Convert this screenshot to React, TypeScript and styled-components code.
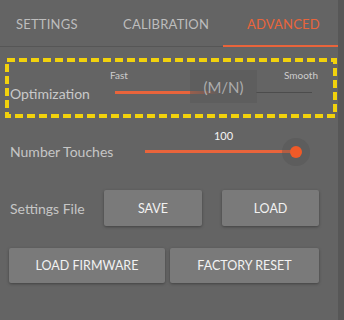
import React from "react";
import styled, { createGlobalStyle } from "styled-components";

const Global = createGlobalStyle`
  html, body { margin: 0; padding: 0; background: #646464; }
  body { font-family: Lato, "Open Sans", sans-serif; width: 344px; height: 320px; overflow: hidden; }
`;

const ORANGE = "#e9643b";

const Frame = styled.div`
  display: flex;
  width: 344px;
  height: 320px;
  background: #646464;
`;

const Main = styled.div`
  width: 338px;
  display: flex;
  flex-direction: column;
`;

const Edge = styled.div`
  width: 6px;
  background: #575757;
`;

const TabBar = styled.div`
  display: flex;
  height: 46px;
  border-bottom: 1px solid #565656;
`;

const Tab = styled.div<{ $w: number; $pad: number; $active?: boolean }>`
  width: ${(p) => p.$w}px;
  box-sizing: border-box;
  padding-left: ${(p) => p.$pad}px;
  display: flex;
  align-items: center;
  font-size: 13px;
  letter-spacing: 0.2px;
  color: ${(p) => (p.$active ? ORANGE : "#bdbdbd")};
  box-shadow: ${(p) => (p.$active ? `inset 0 -2px 0 ${ORANGE}` : "none")};
  margin-bottom: -1px;
`;

const Highlight = styled.div`
  position: relative;
  margin: 11px 1px 0 5px;
  height: 60px;
  display: flex;
`;

const DashBox = styled.svg`
  position: absolute;
  inset: 0;
  width: 100%;
  height: 100%;
  pointer-events: none;
`;

const OptLabel = styled.div`
  width: 105px;
  padding: 27px 0 0 5px;
  box-sizing: border-box;
  font-size: 14px;
  color: #c9c9c9;
`;

const OptSlider = styled.div`
  position: relative;
  width: 210px;
  display: flex;
  flex-direction: column;
`;

const EndLabels = styled.div`
  display: flex;
  justify-content: space-between;
  padding: 11px 2px 0 0;
  font-size: 10px;
  color: #cdcdcd;
  height: 12px;
  line-height: 12px;
`;

const OptTrack = styled.div`
  display: flex;
  align-items: center;
  height: 3px;
  margin: 10px 0 0 5px;
`;

const OptFill = styled.div`
  width: 75px;
  height: 3px;
  background: ${ORANGE};
`;

const OptFade = styled.div`
  width: 30px;
  height: 3px;
  background: linear-gradient(to right, ${ORANGE}, rgba(233, 100, 59, 0));
`;

const OptRest = styled.div`
  margin-left: 36px;
  width: 56px;
  height: 1px;
  background: #4c4c4c;
`;

const ModeBox = styled.div`
  position: absolute;
  left: 80px;
  top: 12px;
  width: 67px;
  height: 33px;
  background: rgba(90, 90, 90, 0.55);
  display: flex;
  align-items: center;
  justify-content: center;
  font-size: 15px;
  color: #adadad;
`;

const Row = styled.div<{ $top: number; $h: number }>`
  display: flex;
  align-items: center;
  margin-top: ${(p) => p.$top}px;
  height: ${(p) => p.$h}px;
  padding-left: 10px;
`;

const Label = styled.div<{ $w: number }>`
  width: ${(p) => p.$w}px;
  font-size: 14px;
  color: #c6c6c6;
`;

const SliderBlock = styled.div`
  width: 151px;
  display: flex;
  flex-direction: column;
  margin-top: -14px;
`;

const Value = styled.div`
  text-align: center;
  font-size: 11px;
  color: #f4f4f4;
  height: 14px;
  line-height: 14px;
  padding-left: 6px;
`;

const TrackWrap = styled.div`
  position: relative;
  height: 16px;
  display: flex;
  align-items: center;
  margin-top: 1px;
`;

const Track = styled.div`
  flex: 1;
  height: 3px;
  background: ${ORANGE};
`;

const Thumb = styled.div`
  position: absolute;
  right: -6px;
  top: 50%;
  width: 12px;
  height: 12px;
  margin-top: -6px;
  border-radius: 50%;
  background: #f05a28;
  box-shadow: 0 0 0 8px rgba(80, 80, 80, 0.35);
`;

const Button = styled.button<{ $w: number; $ml?: number }>`
  width: ${(p) => p.$w}px;
  height: 100%;
  margin-left: ${(p) => p.$ml ?? 0}px;
  border: none;
  border-radius: 2px;
  background: #7a7a7a;
  box-shadow: 0 1px 3px rgba(0, 0, 0, 0.35);
  color: #f2f2f2;
  font-family: Lato, "Open Sans", sans-serif;
  font-size: 12.5px;
  padding: 0;
`;

const ButtonRow = styled.div`
  display: flex;
  margin: 22px 0 0 9px;
  height: 35px;
  gap: 5px;
`;

export default function App() {
  return (
    <>
      <Global />
      <Frame>
        <Main>
          <TabBar>
            <Tab $w={105} $pad={16}>SETTINGS</Tab>
            <Tab $w={118} $pad={18}>CALIBRATION</Tab>
            <Tab $w={115} $pad={24} $active>ADVANCED</Tab>
          </TabBar>

          <Highlight>
            <DashBox>
              <rect
                x="2"
                y="2"
                width="328"
                height="56"
                fill="none"
                stroke="#f2d20c"
                strokeWidth="4"
                strokeDasharray="8 4"
              />
            </DashBox>
            <OptLabel>Optimization</OptLabel>
            <OptSlider>
              <EndLabels>
                <span>Fast</span>
                <span>Smooth</span>
              </EndLabels>
              <OptTrack>
                <OptFill />
                <OptFade />
                <OptRest />
              </OptTrack>
              <ModeBox>(M/N)</ModeBox>
            </OptSlider>
          </Highlight>

          <Row $top={13} $h={40}>
            <Label $w={135}>Number Touches</Label>
            <SliderBlock>
              <Value>100</Value>
              <TrackWrap>
                <Track />
                <Thumb />
              </TrackWrap>
            </SliderBlock>
          </Row>

          <Row $top={19} $h={36}>
            <Label $w={94}>Settings File</Label>
            <Button $w={98}>SAVE</Button>
            <Button $w={97} $ml={20}>LOAD</Button>
          </Row>

          <ButtonRow>
            <Button $w={156}>LOAD FIRMWARE</Button>
            <Button $w={149}>FACTORY RESET</Button>
          </ButtonRow>
        </Main>
        <Edge />
      </Frame>
    </>
  );
}
